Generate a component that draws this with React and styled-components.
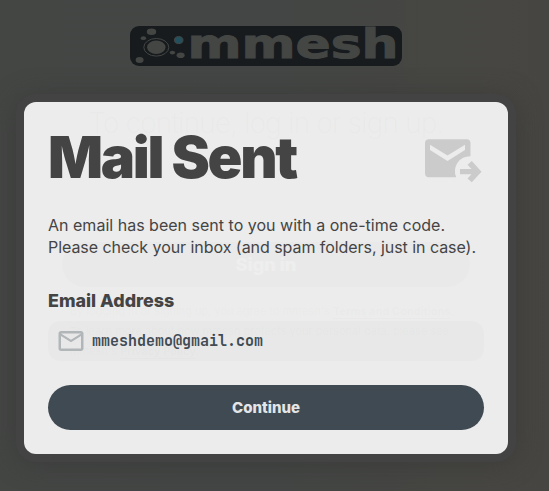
import React from 'react';
import styled, { createGlobalStyle } from 'styled-components';

const GlobalStyle = createGlobalStyle`
  * { box-sizing: border-box; }
  body { margin: 0; overflow: hidden; font-family: Inter, "Open Sans", sans-serif; }
`;

const Screen = styled.div`
  position: relative;
  width: 549px;
  height: 491px;
  overflow: hidden;
  background: linear-gradient(90deg, #444644 0%, #434644 50%, #474642 90%, #464541 100%);
`;

const LoginPage = styled.main`
  display: flex;
  flex-direction: column;
  align-items: center;
  height: 491px;
  padding-top: 26px;
  padding-right: 17px;
`;

const Logo = styled.svg`
  display: block;
  flex: none;
  width: 272px;
  height: 40px;
  overflow: visible;
`;

const Prompt = styled.h2`
  margin: 39px 0 0;
  font-size: 28px;
  line-height: 36px;
  font-weight: 200;
  color: #000;
  white-space: nowrap;
  letter-spacing: -0.8px;
`;

const Field = styled.div`
  width: 408px;
  height: 40px;
  margin-top: 46px;
  border-radius: 12px;
  background: rgba(0, 0, 0, 0.08);
`;

const Button = styled.button`
  display: flex;
  align-items: center;
  justify-content: center;
  flex: none;
  width: ${(p) => p.$width};
  height: 45px;
  padding: 0;
  border: 0;
  border-radius: 23px;
  background: ${(p) => p.$background};
  color: ${(p) => p.$color};
  font: 800 ${(p) => p.$size} Inter, sans-serif;
  margin-top: ${(p) => p.$top};
`;

const Legal = styled.div`
  width: 392px;
  margin-top: 14px;
  font-size: 11px;
  line-height: 20px;
  color: #111;
  white-space: nowrap;
  b { text-decoration: underline; text-underline-offset: 3px; }
`;

const Overlay = styled.div`
  position: absolute;
  inset: 0;
  display: flex;
  align-items: flex-start;
  padding: 102px 0 0 24px;
`;

const Dialog = styled.section`
  display: flex;
  flex-direction: column;
  width: 484px;
  height: 352px;
  padding: 24px;
  border-radius: 12px;
  color: #444;
  background: rgba(245, 245, 245, 0.95);
  box-shadow: 0 0 0 8px #444343, 0 2px 24px 8px rgba(54, 54, 54, 0.62);
`;

const Header = styled.header`
  display: flex;
  justify-content: space-between;
  align-items: center;
  height: 64px;
`;

const Title = styled.h1`
  margin: 0 0 2px;
  font-size: 57.6px;
  line-height: 62px;
  font-weight: 880;
  letter-spacing: -2.3px;
  white-space: nowrap;
`;

const SentIcon = styled.svg`
  width: 62px;
  height: 62px;
  margin-top: 4px;
  fill: #cbcbcb;
`;

const Message = styled.p`
  margin: 24px 0 0;
  font-size: 16px;
  line-height: 22px;
  white-space: nowrap;
`;

const MessageLine = styled.span`
  display: block;
  letter-spacing: ${(p) => p.$tracking};
`;

const Label = styled.h3`
  margin: 30px 0 0;
  font-size: 17.9px;
  line-height: 26px;
  font-weight: 800;
`;

const EmailBox = styled.div`
  display: flex;
  align-items: center;
  height: 40px;
  margin-top: 7px;
  padding-left: 8px;
  border-radius: 12px;
  background: rgba(0, 0, 0, 0.014);
`;

const MailIcon = styled.svg`
  width: 30px;
  height: 30px;
  margin-right: 6px;
  fill: #b1b6b9;
`;

const Address = styled.span`
  color: #404b54;
  font: 700 15px/20px "JetBrains Mono", "DejaVu Sans Mono", monospace;
`;

export default function App() {
  return (
    <>
      <GlobalStyle />
      <Screen>
        <LoginPage>
          <Logo viewBox="0 0 272 40" role="img" aria-label="mmesh">
            <rect width="272" height="40" rx="9" fill="#171b1e" />
            <g fill="#444644">
              <ellipse cx="21.5" cy="5.8" rx="4.7" ry="3.2" />
              <ellipse cx="13.4" cy="12.2" rx="2.7" ry="1.9" />
              <ellipse cx="9.6" cy="34" rx="4" ry="2.9" />
              <ellipse cx="42.4" cy="26.6" rx="2.7" ry="1.9" />
              <ellipse cx="50.6" cy="29.2" rx="4" ry="2.8" />
              <ellipse cx="26.3" cy="21.3" rx="9.2" ry="6.7" />
            </g>
            <ellipse cx="26.3" cy="21.3" rx="12.5" ry="8.8" fill="none" stroke="#444644" />
            <ellipse cx="48.7" cy="14.1" rx="4.3" ry="3.5" fill="#23505d" stroke="#444644" />
            <text x="57.5" y="31.5" fill="#444644" stroke="#444644" strokeWidth="1" fontFamily="DejaVu Sans" fontWeight="700" fontSize="41" textLength="211" lengthAdjust="spacingAndGlyphs">mmesh</text>
          </Logo>
          <Prompt>To continue, log in or sign up.</Prompt>
          <Field />
          <Button $width="408px" $background="#111" $color="#666" $size="18px" $top="15px">Sign in</Button>
          <Legal>
            By logging in or signing up, you agree to mmesh's <b>Terms and Conditions</b>.<br />
            To learn more about how mmesh protects your personal data, please see<br />
            mmesh's <b>Privacy Policy</b>.
          </Legal>
        </LoginPage>
        <Overlay>
          <Dialog role="dialog" aria-label="Mail Sent">
            <Header>
              <Title>Mail Sent</Title>
              <SentIcon viewBox="0 0 62 62">
                <path fillRule="evenodd" d="M7 10.3h37.5a4 4 0 0 1 4 4V27.2A15 15 0 0 0 34.2 48.3H7a4 4 0 0 1-4-4V14.3a4 4 0 0 1 4-4zM8 15.8V21L25.5 32 43 21V15.8L25.5 26.5z" />
                <path d="M38 40h11.5l-4-4.2 4.3-3.8 9.7 10.7-9.7 10.5-4.3-3.7 4-4.2H38z" />
              </SentIcon>
            </Header>
            <Message>
              <MessageLine $tracking="0.01px">An email has been sent to you with a one-time code.</MessageLine>
              <MessageLine $tracking="-0.05px">Please check your inbox (and spam folders, just in case).</MessageLine>
            </Message>
            <Label>Email Address</Label>
            <EmailBox>
              <MailIcon viewBox="0 0 24 24">
                <path d="M22 6c0-1.1-.9-2-2-2H4c-1.1 0-2 .9-2 2v12c0 1.1.9 2 2 2h16c1.1 0 2-.9 2-2V6zm-2 0-8 5-8-5h16zm0 12H4V8l8 5 8-5v10z" />
              </MailIcon>
              <Address>mmeshdemo@gmail.com</Address>
            </EmailBox>
            <Button $width="436px" $background="#404a52" $color="#e4e5e6" $size="15px" $top="24px">Continue</Button>
          </Dialog>
        </Overlay>
      </Screen>
    </>
  );
}
